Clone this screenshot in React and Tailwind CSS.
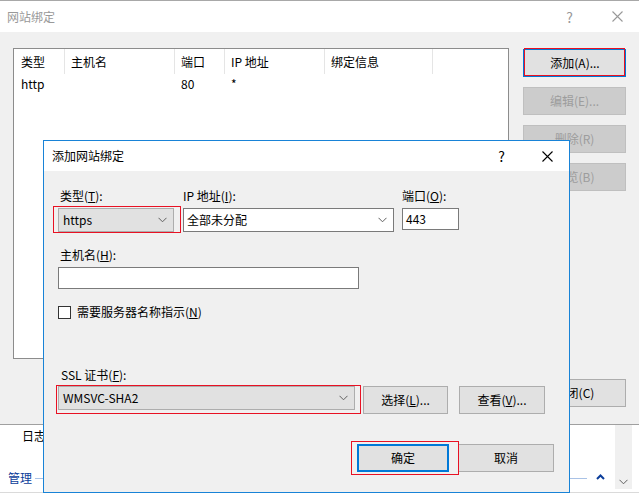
import React from "react";

const FONT = "font-['Noto_Sans_CJK_SC','Microsoft_YaHei',sans-serif]";

function CloseX({ color = "#000" }) {
  return (
    <svg width="11" height="11" viewBox="0 0 11 11">
      <path d="M0.5 0.5 L10.5 10.5 M10.5 0.5 L0.5 10.5" stroke={color} strokeWidth="1.1" fill="none" />
    </svg>
  );
}

function Chevron({ color = "#606060" }) {
  return (
    <svg width="9" height="6" viewBox="0 0 9 6">
      <path d="M0.5 0.8 L4.5 4.8 L8.5 0.8" stroke={color} strokeWidth="1" fill="none" />
    </svg>
  );
}

function Btn({ children, disabled, className = "" }) {
  return (
    <div
      className={`flex items-center justify-center h-[28px] border ${
        disabled ? "bg-[#cccccc] border-[#bfbfbf] text-[#9d9d9d]" : "bg-[#e1e1e1] border-[#adadad] text-black"
      } ${className}`}
    >
      {children}
    </div>
  );
}

export default function App() {
  return (
    <div className={`relative w-[639px] h-[504px] bg-white overflow-hidden text-[12px] leading-[16px] text-black ${FONT}`}>
      {/* Outer window title bar */}
      <div className="h-[32px] border-t border-[#a8a8a8] bg-white flex items-center">
        <span className="pl-[7px] text-[#999999]">网站绑定</span>
        <span className="ml-auto text-[14px] text-[#999999] mr-[39px]">?</span>
        <span className="mr-[16px]"><CloseX color="#999999" /></span>
      </div>

      {/* Outer body */}
      <div className="h-[393px] bg-[#f0f0f0] border-b border-[#a0a0a0] flex items-start pl-[13px] pt-[16px]">
        {/* List view */}
        <div className="w-[496px] h-[311px] bg-white border border-[#8c8c8c]">
          <div className="flex h-[25px]">
            <div className="w-[51px] border-r border-[#e5e5e5] pl-[7px] flex items-center">类型</div>
            <div className="w-[110px] border-r border-[#e5e5e5] pl-[6px] flex items-center">主机名</div>
            <div className="w-[50px] border-r border-[#e5e5e5] pl-[6px] flex items-center">端口</div>
            <div className="w-[100px] border-r border-[#e5e5e5] pl-[6px] flex items-center">IP 地址</div>
            <div className="w-[108px] border-r border-[#e5e5e5] pl-[6px] flex items-center">绑定信息</div>
          </div>
          <div className="flex h-[20px] items-center">
            <div className="w-[161px] pl-[7px]">http</div>
            <div className="w-[50px] pl-[6px]">80</div>
            <div className="w-[100px] pl-[6px]">*</div>
          </div>
        </div>

        {/* Right buttons */}
        <div className="ml-[14px] mt-[1px] w-[103px] flex flex-col gap-[10px]">
          <div className="relative">
            <div className="flex items-center justify-center h-[28px] bg-[#e1e1e1] border-l-2 border-b-2 border-t border-r border-[#0078d7]">
              添加(A)...
            </div>
            <div className="absolute -top-[1px] left-[1px] right-[1px] bottom-[1px] border border-[#e81123]" />
          </div>
          <Btn disabled>编辑(E)...</Btn>
          <Btn disabled>删除(R)</Btn>
          <Btn disabled>浏览(B)</Btn>
          <Btn className="mt-[178px]">关闭(C)</Btn>
        </div>
      </div>

      {/* Outer bottom area */}
      <div className="h-[68px] border-b border-[#dadada] relative">
        <div className="pl-[22px] pt-[3px]">日志</div>
        <div className="flex items-center mt-[26px]">
          <span className="pl-[8px] text-[#0b3d9a]">管理</span>
          <div className="ml-[3px] w-[552px] h-px bg-[#a9c2e6]" />
          <span className="ml-[9px] mt-[-2px]">
            <svg width="9" height="6" viewBox="0 0 9 6">
              <path d="M1 5 L4.5 1.5 L8 5" stroke="#0b3d9a" strokeWidth="2" fill="none" />
            </svg>
          </span>
        </div>
        <div className="absolute right-[7px] top-0 w-[17px] h-[64px] bg-[#f0f0f0] flex items-end justify-center pb-[4px]">
          <Chevron color="#606060" />
        </div>
      </div>

      {/* Dialog */}
      <div className="absolute left-[43px] top-[140px] w-[527px] h-[353px] border border-[#1883d7] bg-[#f0f0f0] flex flex-col">
        <div className="h-[30px] bg-white flex items-center shrink-0">
          <span className="pl-[8px]">添加网站绑定</span>
          <span className="ml-auto mr-[37px] text-[14px]">?</span>
          <span className="mr-[16px]"><CloseX /></span>
        </div>

        <div className="flex-1 pl-[14px] pr-[15px]">
          {/* Row 1 */}
          <div className="flex mt-[17px]">
            <div className="w-[116px] flex flex-col gap-[4px]">
              <div className="pl-[2px]">类型(<u>T</u>):</div>
              <div className="relative">
                <div className="h-[24px] bg-[#e1e1e1] border border-[#adadad] flex items-center pl-[4px] pr-[6px]">
                  <span>https</span>
                  <span className="ml-auto"><Chevron /></span>
                </div>
                <div className="absolute -top-[2px] -left-[5px] -right-[7px] -bottom-[1px] border border-[#e81123]" />
              </div>
            </div>
            <div className="ml-[9px] w-[211px] flex flex-col gap-[4px]">
              <div>IP 地址(<u>I</u>):</div>
              <div className="h-[24px] bg-white border border-[#7a7a7a] flex items-center pl-[3px] pr-[6px]">
                <span>全部未分配</span>
                <span className="ml-auto"><Chevron /></span>
              </div>
            </div>
            <div className="ml-[8px] w-[57px] flex flex-col gap-[4px]">
              <div>端口(<u>O</u>):</div>
              <div className="h-[22px] bg-white border border-[#7a7a7a] flex items-center pl-[3px]">443</div>
            </div>
          </div>

          {/* Host name */}
          <div className="mt-[15px] pl-[2px]">主机名(<u>H</u>):</div>
          <div className="mt-[4px] w-[301px] h-[22px] bg-white border border-[#7a7a7a]" />

          {/* Checkbox */}
          <div className="mt-[15px] flex items-center">
            <div className="w-[13px] h-[13px] bg-white border border-[#333333]" />
            <span className="ml-[6px]">需要服务器名称指示(<u>N</u>)</span>
          </div>

          {/* SSL */}
          <div className="mt-[47px] pl-[3px]">SSL 证书(<u>F</u>):</div>
          <div className="mt-[3px] flex items-start">
            <div className="relative">
              <div className="w-[297px] h-[24px] bg-[#e1e1e1] border border-[#adadad] flex items-center pl-[4px] pr-[6px]">
                <span>WMSVC-SHA2</span>
                <span className="ml-auto"><Chevron /></span>
              </div>
              <div className="absolute -top-[1px] -left-[2px] -right-[6px] -bottom-[4px] border border-[#e81123]" />
            </div>
            <Btn className="ml-[8px] w-[85px]">选择(<u>L</u>)...</Btn>
            <Btn className="ml-[11px] w-[86px]">查看(<u>V</u>)...</Btn>
          </div>

          {/* Bottom buttons */}
          <div className="mt-[30px] flex justify-end">
            <div className="relative">
              <div className="w-[92px] h-[28px] bg-[#e1e1e1] border-2 border-[#0078d7] flex items-center justify-center">确定</div>
              <div className="absolute -top-[3px] -left-[6px] -right-[10px] -bottom-[3px] border border-[#e81123]" />
            </div>
            <Btn className="ml-[9px] w-[96px]">取消</Btn>
          </div>
        </div>
      </div>
    </div>
  );
}
